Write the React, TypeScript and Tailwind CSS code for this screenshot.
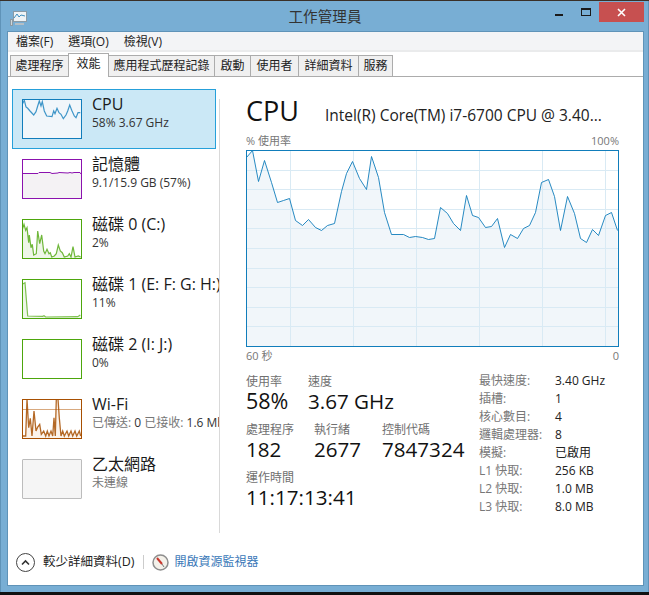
import React from "react";

const F = "font-['Open_Sans','Noto_Sans_CJK_TC',sans-serif]";

function pts(a: number[][]) {
  return a.map((p) => p.join(",")).join(" ");
}

function z(a: number[][], oy: number) {
  return a.map(([x, y]) => [+((x - 13) / 3).toFixed(1), +((y - oy) / 3).toFixed(1)]);
}

const cpu = [[247,158],[253,151],[259,182],[265,161],[272,183],[278,203],[284,201],[290,199],[296,221],[303,226],[309,220],[316,228],[322,231],[328,226],[335,224],[342,192],[347,174],[353,162],[360,179],[367,190],[372,157],[379,178],[385,213],[392,235],[404,235],[410,238],[416,237],[423,238],[429,240],[435,239],[441,208],[448,214],[454,224],[461,231],[467,196],[473,216],[479,218],[486,228],[492,227],[498,219],[505,248],[511,235],[518,239],[524,229],[530,226],[536,213],[542,183],[549,180],[555,197],[561,231],[568,197],[575,214],[581,239],[587,243],[593,230],[599,236],[606,216],[612,213],[618,231]];

function Chart() {
  const p = cpu.map(([x, y]) => [x - 246.5, y - 150.5]);
  const h = [20, 39, 59, 78, 98, 118, 137, 157, 176];
  const v = [44, 107, 170, 233, 296, 359];
  return (
    <svg width="373" height="197" className="block">
      <rect x="0.5" y="0.5" width="372" height="196" fill="#fff" stroke="#117dbb" />
      <polygon points={`0.5,196 ${pts(p)} 372,196`} fill="#f1f6fa" />
      {h.map((y) => (
        <line key={y} x1="1" x2="372" y1={y + 0.5} y2={y + 0.5} stroke="#d9eaf4" />
      ))}
      {v.map((x) => (
        <line key={x} y1="1" y2="196" x1={x + 0.5} x2={x + 0.5} stroke="#d9eaf4" />
      ))}
      <polyline points={pts(p)} fill="none" stroke="#117dbb" strokeWidth="1" opacity="0.9" />
      <rect x="0.5" y="0.5" width="372" height="196" fill="none" stroke="#117dbb" />
    </svg>
  );
}

const cpuT = z([[14,30],[20,18],[25,38],[30,42],[37,50],[48,62],[55,52],[60,35],[65,20],[70,35],[74,22],[80,50],[87,65],[103,67],[108,50],[112,58],[118,42],[124,55],[130,60],[137,73],[145,62],[150,50],[156,32],[162,48],[170,65],[175,70],[181,55],[188,55]], 14);
const memT = [[1,14.5],[16,14.5],[17,13.5],[28,13.5],[30,14.5],[36,14],[37,13.5],[46,14],[48,13.5],[50,14],[52,13.5],[58,13.5],[59,15]];
const d0T = z([[14,45],[19,30],[24,48],[28,40],[33,85],[35,62],[40,100],[44,90],[48,122],[56,118],[60,50],[66,88],[72,62],[78,110],[82,118],[88,105],[94,118],[98,115],[102,128],[110,125],[116,118],[122,92],[128,110],[134,115],[140,128],[150,125],[155,118],[160,128],[166,97],[172,128],[182,125],[189,128]], 14);
const d1T = z([[14,210],[22,205],[30,305],[75,306],[79,304],[84,308],[180,307],[188,302]], 194);
const wifiT = z([[14,125],[24,125],[28,14],[33,100],[38,72],[43,125],[49,50],[55,110],[60,98],[66,90],[71,120],[78,110],[84,125],[89,110],[94,125],[100,110],[105,125],[109,70],[113,125],[116,14],[121,14],[125,70],[130,125],[135,110],[140,125],[148,110],[153,125],[160,110],[165,125],[172,110],[177,125],[185,110],[189,125]], 14);

function Thumb({ kind }: { kind: string }) {
  const W = 60, H = 40;
  const frame = (stroke: string, fill: string, children?: React.ReactNode) => (
    <svg width={W} height={H} className="block shrink-0">
      <rect x="0.5" y="0.5" width={W - 1} height={H - 1} fill={fill} stroke={stroke} />
      {children}
      <rect x="0.5" y="0.5" width={W - 1} height={H - 1} fill="none" stroke={stroke} />
    </svg>
  );
  if (kind === "cpu") {
    return frame("#117dbb", "#f1f6fa", <>
      <polygon points={`1,39 ${pts(cpuT)} 59,39 59,1 1,1`} fill="#f1f6fa" />
      <polyline points={pts(cpuT)} fill="none" stroke="#117dbb" strokeWidth="1.2" opacity="0.8" />
    </>);
  }
  if (kind === "mem") {
    return frame("#8b12ae", "#f4f2f4", <>
      <polygon points={`1,1 ${pts(memT)} 59,1`} fill="#fff" />
      <polyline points={pts(memT)} fill="none" stroke="#8b12ae" />
    </>);
  }
  if (kind === "d0") {
    return frame("#4da60c", "#fff", <>
      <polygon points={`1,39 ${pts(d0T)} 59,39`} fill="#eef6e8" />
      <polyline points={pts(d0T)} fill="none" stroke="#4da60c" strokeWidth="1.2" opacity="0.8" />
    </>);
  }
  if (kind === "d1") {
    return frame("#4da60c", "#fff", <>
      <polygon points={`1,39 ${pts(d1T)} 59,39`} fill="#eef6e8" />
      <polyline points={pts(d1T)} fill="none" stroke="#4da60c" strokeWidth="1.2" opacity="0.7" />
    </>);
  }
  if (kind === "d2") return frame("#4da60c", "#fff");
  if (kind === "wifi") {
    return frame("#a74f01", "#fff", <>
      <polygon points={`1,39 ${pts(wifiT)} 59,39`} fill="#fcf3eb" />
      <line x1="1" x2="59" y1="10.5" y2="10.5" stroke="#d8a97f" />
      <polyline points={pts(wifiT)} fill="none" stroke="#a74f01" strokeWidth="1.3" opacity="0.85" />
    </>);
  }
  return <div className="w-[60px] h-[40px] shrink-0 bg-[#f5f5f5] border border-[#bcbcbc] rounded-[1px]" />;
}

function Item({ kind, title, sub, active, subGray }: { kind: string; title: string; sub: React.ReactNode; active?: boolean; subGray?: boolean }) {
  return (
    <div className={`h-[60px] w-[204px] flex items-start pl-[9px] pt-[9px] gap-[10px] border ${active ? "bg-[#cbe8f6] border-[#26a0da]" : "border-transparent"}`}>
      <Thumb kind={kind} />
      <div className="-mt-[6px] whitespace-nowrap min-w-0">
        <div className="text-[16px] leading-[22px] text-[#1a1a1a]">{title}</div>
        <div className={`text-[12px] leading-[15px] ${subGray ? "text-[#777]" : "text-[#333]"}`}>{sub}</div>
      </div>
    </div>
  );
}

function Stat({ label, value, w, big }: { label: string; value: string; w: string; big?: boolean }) {
  return (
    <div className={w}>
      <div className="text-[12px] leading-[16px] text-[#707070]">{label}</div>
      <div className={`${big ? "text-[21.5px]" : "text-[20.6px]"} leading-[22px] text-[#111] whitespace-nowrap`}>{value}</div>
    </div>
  );
}

const specs = [
  ["最快速度:", "3.40 GHz"],
  ["插槽:", "1"],
  ["核心數目:", "4"],
  ["邏輯處理器:", "8"],
  ["模擬:", "已啟用"],
  ["L1 快取:", "256 KB"],
  ["L2 快取:", "1.0 MB"],
  ["L3 快取:", "8.0 MB"],
];

const tabs = [
  ["處理程序", "w-[59px]"],
  ["效能", "w-[41px]"],
  ["應用程式歷程記錄", "w-[107px]"],
  ["啟動", "w-[37px]"],
  ["使用者", "w-[49px]"],
  ["詳細資料", "w-[61px]"],
  ["服務", "w-[35px]"],
];

export default function App() {
  return (
    <div className={`w-[649px] h-[595px] overflow-hidden bg-[#111] ${F}`}>
      <div className="h-[1px] bg-[#3a3028]" />
      <div className="h-[591px] bg-[#78aed4] flex flex-col border-x border-[#5f93b8]">
        {/* title bar */}
        <div className="h-[30px] shrink-0 flex items-start">
          <svg width="18" height="16" viewBox="0 0 18 16" className="ml-[9px] mt-[10px]">
            <rect x="3.5" y="0.5" width="13" height="10" fill="#eef3f6" stroke="#8a9aa5" />
            <polyline points="4,7 7,3 9,6 11,4 15,5" fill="none" stroke="#3f8fc0" />
            <rect x="0.5" y="8.5" width="2" height="6" fill="#cfd6da" stroke="#8a9aa5" />
            <rect x="5" y="12" width="9" height="2" fill="#b4bec5" />
          </svg>
          <div className="flex-1 text-center text-[14.6px] leading-[20px] pt-[5px] pl-[67px] text-[#333]">工作管理員</div>
          <div className="flex items-start mr-[4px]">
            <div className="w-[8px] h-[2px] mt-[13px] bg-[#1a1a1a]" />
            <div className="w-[10px] h-[8px] ml-[18px] mt-[7px] border border-t-2 border-[#1a1a1a]" />
            <div className="w-[45px] h-[20px] ml-[8px] mt-[1px] bg-[#c75050] flex items-center justify-center">
              <svg width="9" height="9" viewBox="0 0 9 9"><path d="M1 1 L8 8 M8 1 L1 8" stroke="#fff" strokeWidth="1.6" /></svg>
            </div>
          </div>
        </div>
        {/* client */}
        <div className="flex-1 ml-[6px] mr-[4px] mb-[6px] bg-white border border-[#5f93b8] flex flex-col min-h-0">
          <div className="h-[18px] bg-[#f3f4f6] flex items-center pl-[8px] pt-[2px] gap-[15px] text-[12px] text-[#222] shrink-0">
            <span>檔案(F)</span><span>選項(O)</span><span>檢視(V)</span>
          </div>
          <div className="h-[27px] shrink-0 flex items-end pl-[2px] border-b border-[#acacac] border-t-2 border-t-[#eaebec]">
            {tabs.map(([t, w], i) => (
              <div
                key={t}
                className={i === 1
                  ? `${w} h-[24px] -ml-px -mb-[1px] pt-[1px] bg-white border border-b-0 border-[#acacac] text-[12px] leading-[18px] text-center text-[#222]`
                  : `${w} h-[21px] -ml-px first:ml-0 bg-[#f0f0f0] border border-b-0 border-[#acacac] text-[12px] leading-[20px] text-center text-[#222] whitespace-nowrap`}
              >
                {t}
              </div>
            ))}
          </div>
          <div className="flex-1 flex min-h-0">
            <div className="w-[212px] shrink-0 border-r border-[#d9d9d9] mt-[22px] mb-[16px] -mr-px">
              <div className="-mt-[10px] ml-[4px] w-[207px] overflow-hidden flex flex-col">
                <Item kind="cpu" title="CPU" sub="58%  3.67 GHz" active />
                <Item kind="mem" title="記憶體" sub="9.1/15.9 GB (57%)" />
                <Item kind="d0" title="磁碟 0 (C:)" sub="2%" />
                <Item kind="d1" title="磁碟 1 (E: F: G: H:)" sub="11%" />
                <Item kind="d2" title="磁碟 2 (I: J:)" sub="0%" />
                <Item kind="wifi" title="Wi-Fi" sub={<span><span className="text-[#777]">已傳送:</span> 0 <span className="text-[#777]">已接收:</span> 1.6 Mbps</span>} />
                <Item kind="eth" title="乙太網路" sub="未連線" subGray />
              </div>
            </div>
            <div className="flex-1 pl-[27px] pt-[17px] min-w-0">
              <div className="flex items-start h-[34px]">
                <div className="text-[27px] leading-[34px] text-[#111]">CPU</div>
                <div className="ml-[26px] mt-[10px] text-[15.5px] leading-[22px] text-[#222] whitespace-nowrap">Intel(R) Core(TM) i7-6700 CPU @ 3.40...</div>
              </div>
              <div className="w-[373px] flex justify-between text-[11px] leading-[14px] text-[#777] mt-[6px]">
                <span>% 使用率</span><span>100%</span>
              </div>
              <div className="mt-[2px]"><Chart /></div>
              <div className="w-[373px] flex justify-between text-[11px] leading-[14px] text-[#777] mt-[2px]">
                <span>60 秒</span><span>0</span>
              </div>
              <div className="flex mt-[11px]">
                <div className="w-[233px] shrink-0">
                  <div className="flex">
                    <Stat label="使用率" value="58%" w="w-[62px]" big />
                    <Stat label="速度" value="3.67 GHz" w="w-[120px]" />
                  </div>
                  <div className="flex mt-[10px]">
                    <Stat label="處理程序" value="182" w="w-[68px]" />
                    <Stat label="執行緒" value="2677" w="w-[68px]" />
                    <Stat label="控制代碼" value="7847324" w="w-[90px]" />
                  </div>
                  <div className="mt-[10px]">
                    <Stat label="運作時間" value="11:17:13:41" w="w-[150px]" />
                  </div>
                </div>
                <div className="text-[12px] leading-[18px] -mt-[2px]">
                  {specs.map(([a, b]) => (
                    <div key={a} className="flex">
                      <div className="w-[76px] text-[#777]">{a}</div>
                      <div className="text-[#222]">{b}</div>
                    </div>
                  ))}
                </div>
              </div>
            </div>
          </div>
          <div className="h-[36px] shrink-0 flex items-center pl-[8px] pb-[10px]">
            <div className="w-[19px] h-[19px] rounded-full border border-[#444] flex items-center justify-center">
              <svg width="9" height="7" viewBox="0 0 9 7"><path d="M1 5.5 L4.5 2 L8 5.5" fill="none" stroke="#333" strokeWidth="1.6" /></svg>
            </div>
            <span className="ml-[8px] text-[12.5px] text-[#222]">較少詳細資料(D)</span>
            <div className="w-px h-[14px] bg-[#ccc] ml-[9px]" />
            <svg width="17" height="17" viewBox="0 0 17 17" className="ml-[8px]">
              <circle cx="8.5" cy="8.5" r="7.5" fill="#f4f1ea" stroke="#8e8e8e" strokeWidth="1.5" />
              <path d="M5 4 L10 10" stroke="#c8372d" strokeWidth="2" />
              <path d="M10 10 L12 13" stroke="#777" strokeWidth="1" />
            </svg>
            <span className="ml-[5px] text-[12px] text-[#3a78b8]">開啟資源監視器</span>
          </div>
        </div>
      </div>
    </div>
  );
}
